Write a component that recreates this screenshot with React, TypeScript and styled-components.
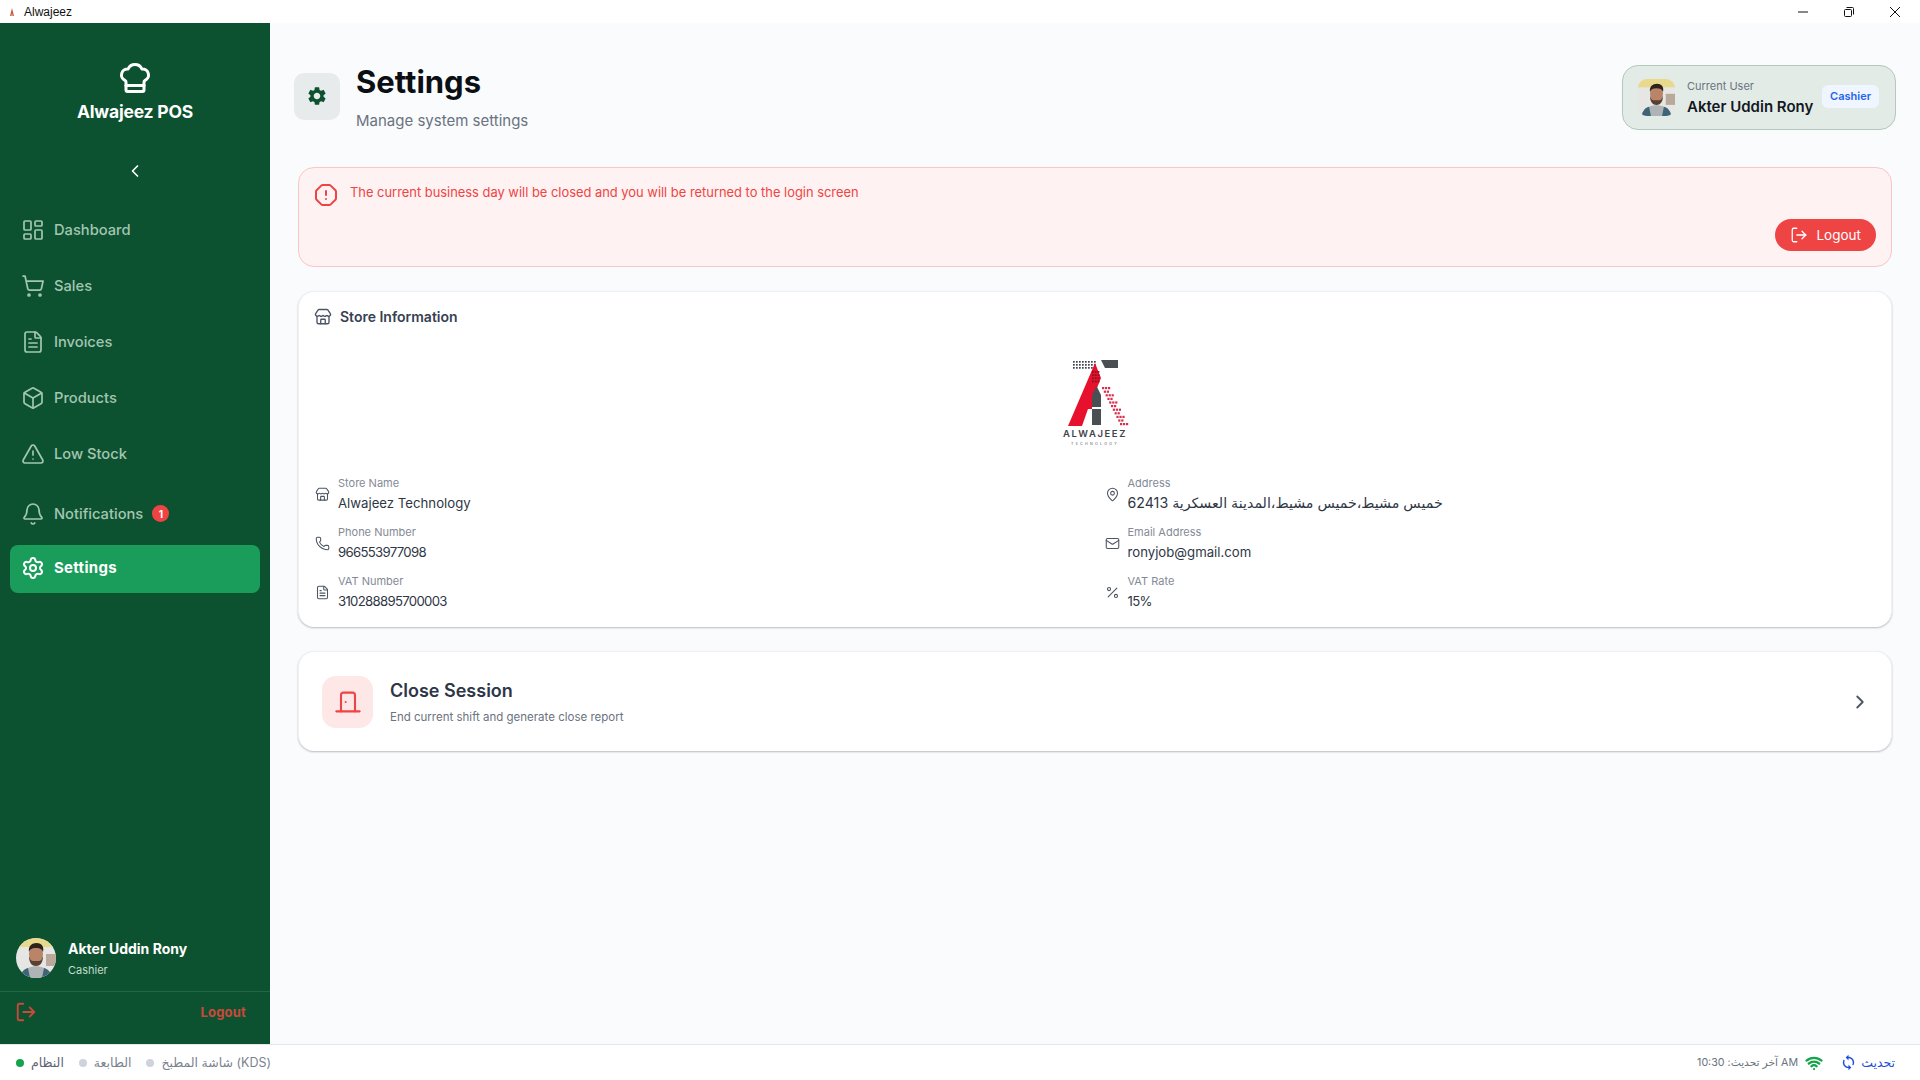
import styled, { createGlobalStyle } from "styled-components";
import {
  Bell,
  Box,
  ChefHat,
  ChevronLeft,
  ChevronRight,
  DoorClosed,
  FileText,
  LayoutDashboard,
  LogOut,
  Mail,
  MapPin,
  OctagonAlert,
  Percent,
  Phone,
  Settings as SettingsIcon,
  ShoppingCart,
  Store,
  TriangleAlert,
  Wifi,
} from "lucide-react";
import { MdSettings, MdSync } from "react-icons/md";

const GlobalStyle = createGlobalStyle`
  html, body, #root {
    margin: 0;
    height: 100%;
  }

  body {
    font-family: Inter, "DejaVu Sans", sans-serif;
    background: #f9fbfd;
    overflow: hidden;
  }

  * {
    box-sizing: border-box;
  }
`;

const Shell = styled.div`
  display: flex;
  flex-direction: column;
  width: 1920px;
  height: 1080px;
`;

const TitleBar = styled.div`
  display: flex;
  align-items: center;
  height: 23px;
  padding: 0 2px 0 9px;
  background: #fff;
  color: #111;
  font-size: 12px;
`;

const TitleName = styled.span`
  margin-left: 9px;
  flex: 1;
  font-family: "Liberation Sans", sans-serif;
`;

const WindowButton = styled.div`
  display: flex;
  align-items: center;
  justify-content: center;
  width: 46px;
  height: 23px;
`;

const Body = styled.div`
  flex: 1;
  display: flex;
  min-height: 0;
`;

const Sidebar = styled.aside`
  display: flex;
  flex-direction: column;
  width: 270px;
  background: #0d5230;
`;

const Brand = styled.div`
  display: flex;
  flex-direction: column;
  align-items: center;
  height: 183px;
  padding-top: 37px;
  color: #fff;
`;

const BrandName = styled.div`
  margin-top: 4px;
  font-size: 17.5px;
  font-weight: 700;
  line-height: 24px;
  letter-spacing: -0.2px;
`;

const Collapse = styled.div`
  margin-top: 37px;
  height: 24px;
`;

const Nav = styled.nav`
  flex: 1;
  display: flex;
  flex-direction: column;
  gap: 8px;
  padding: 0 10px;
`;

const NavItem = styled.div<{ $active?: boolean; $tall?: boolean }>`
  display: flex;
  align-items: center;
  gap: 9px;
  height: ${(p) => (p.$tall ? "51px" : "48px")};
  padding-left: 11px;
  padding-top: ${(p) => (p.$tall ? "4px" : "0")};
  padding-bottom: ${(p) => (p.$active ? "3px" : "0")};
  border-radius: 8px;
  background: ${(p) => (p.$active ? "#1a9c5b" : "transparent")};
  color: ${(p) => (p.$active ? "#fff" : "#a3c6b2")};
  font-size: ${(p) => (p.$active ? "15px" : "14.7px")};
  font-weight: ${(p) => (p.$active ? 700 : 500)};
  letter-spacing: ${(p) => (p.$active ? "0.3px" : "0")};
`;

const CountBadge = styled.span`
  display: flex;
  align-items: center;
  justify-content: center;
  width: 17px;
  height: 17px;
  border-radius: 50%;
  background: #ef4444;
  color: #fff;
  font-size: 10px;
  font-weight: 700;
`;

const Profile = styled.div`
  display: flex;
  align-items: center;
  gap: 12px;
  height: 71px;
  padding: 4px 16px 0;
  margin-top: -24px;
  border-bottom: 1px solid #1f6a45;
`;

const ProfileName = styled.div`
  color: #fff;
  font-size: 14px;
  font-weight: 700;
  line-height: 20px;
`;

const ProfileRole = styled.div`
  margin-top: 4px;
  color: #c3dccd;
  font-size: 11px;
  line-height: 14px;
`;

const SideLogout = styled.div`
  display: flex;
  align-items: center;
  justify-content: space-between;
  height: 52px;
  padding: 0 24px 12px 15px;
  color: #c9493b;
  font-size: 13px;
  font-weight: 700;
  letter-spacing: 0.2px;
`;

const AvatarFrame = styled.svg<{ $size: number; $radius: string }>`
  flex: none;
  width: ${(p) => p.$size}px;
  height: ${(p) => p.$size}px;
  border-radius: ${(p) => p.$radius};
`;

const Main = styled.main`
  flex: 1;
  min-width: 0;
  padding: 39px 24px 0;
`;

const Header = styled.header`
  display: flex;
  align-items: center;
  justify-content: space-between;
  height: 68px;
`;

const HeaderLeft = styled.div`
  display: flex;
  align-items: center;
  gap: 16px;
`;

const GearBox = styled.div`
  display: flex;
  align-items: center;
  justify-content: center;
  width: 46px;
  height: 47px;
  border-radius: 10px;
  background: #e8ebeb;
  color: #0d5230;
`;

const PageTitle = styled.h1`
  margin: 0;
  color: #0b0f14;
  font-size: 31px;
  font-weight: 700;
  line-height: 40px;
`;

const PageSubtitle = styled.div`
  margin-top: 9px;
  color: #6b7280;
  font-size: 15px;
  line-height: 20px;
`;

const UserCard = styled.div`
  display: flex;
  align-items: center;
  width: 274px;
  height: 65px;
  margin-top: 2px;
  padding: 0 16px 0 15px;
  border: 1px solid #b4c8bd;
  border-radius: 16px;
  background: #e2ebe6;
`;

const UserText = styled.div`
  flex: 1;
  margin-left: 12px;
  padding-top: 1px;
`;

const UserLabel = styled.div`
  color: #6b7280;
  font-size: 11px;
  line-height: 14px;
`;

const UserName = styled.div`
  margin-top: 4px;
  color: #14181f;
  font-size: 15px;
  font-weight: 600;
  line-height: 20px;
  white-space: nowrap;
`;

const RoleBadge = styled.div`
  margin-bottom: 2px;
  padding: 0 8px;
  height: 23px;
  line-height: 23px;
  border-radius: 6px;
  background: #eff6ff;
  color: #2563eb;
  font-size: 11px;
  font-weight: 600;
`;

const Content = styled.div`
  display: flex;
  flex-direction: column;
  gap: 24px;
  margin: 37px 4px 0 4px;
`;

const Alert = styled.section`
  height: 100px;
  padding: 15px;
  border: 1px solid #fbc6c6;
  border-radius: 16px;
  background: #fef2f2;
  color: #ef4444;
`;

const AlertRow = styled.div`
  display: flex;
  align-items: flex-start;
  gap: 12px;
  font-size: 12.9px;
  line-height: 20px;
`;

const AlertAction = styled.div`
  display: flex;
  justify-content: flex-end;
  margin-top: 12px;
`;

const DangerButton = styled.button`
  display: flex;
  align-items: center;
  gap: 8px;
  height: 32px;
  padding: 0 15px;
  border: 0;
  border-radius: 16px;
  background: #ef4444;
  color: #fff;
  font-family: inherit;
  font-size: 13.5px;
`;

const Card = styled.section`
  padding: 0 16px;
  border: 1px solid #eef0f3;
  border-bottom: 0;
  border-radius: 16px;
  background: #fff;
  box-shadow: 0 1px 2px rgba(15, 23, 42, 0.28);
`;

const StoreCard = styled(Card)`
  height: 336px;
`;

const CardTitle = styled.div`
  display: flex;
  align-items: center;
  gap: 8px;
  height: 48px;
  margin-left: -1px;
  padding-top: 1px;
  color: #374151;
  font-size: 14px;
  font-weight: 600;
`;

const LogoWrap = styled.div`
  display: flex;
  justify-content: center;
  height: 134px;
  padding-top: 18px;
`;

const InfoGrid = styled.div`
  display: grid;
  grid-template-columns: 1fr 1fr;
  column-gap: 19px;
  row-gap: 9px;
`;

const InfoItem = styled.div`
  display: flex;
  align-items: center;
  gap: 8px;
  height: 40px;
  color: #4b5563;
`;

const InfoLabel = styled.div`
  color: #848a96;
  font-size: 11px;
  line-height: 14px;
`;

const InfoValue = styled.div<{ $kind: string }>`
  margin-top: 4px;
  color: #2f3644;
  font-size: ${(p) => (p.$kind === "arabic" ? "14.2px" : "13.2px")};
  letter-spacing: ${(p) => (p.$kind === "number" ? "-0.7px" : "0")};
  line-height: 18px;
`;

const SessionCard = styled(Card)`
  display: flex;
  align-items: center;
  height: 100px;
  padding: 0 20px 0 23px;
`;

const SessionIcon = styled.div`
  display: flex;
  align-items: center;
  justify-content: center;
  width: 51px;
  height: 52px;
  border-radius: 14px;
  background: #fee7e7;
  color: #ef4444;
`;

const SessionText = styled.div`
  flex: 1;
  margin-left: 17px;
`;

const SessionTitle = styled.div`
  color: #2d3748;
  font-size: 18px;
  font-weight: 600;
  line-height: 24px;
`;

const SessionHint = styled.div`
  margin-top: 6px;
  color: #6b7280;
  font-size: 11.5px;
  line-height: 16px;
`;

const StatusBar = styled.footer`
  display: flex;
  align-items: center;
  justify-content: space-between;
  height: 36px;
  padding: 0 25px 0 16px;
  border-top: 1px solid #e5e7eb;
  background: #fff;
  font-size: 12.5px;
`;

const StatusGroup = styled.div`
  display: flex;
  align-items: center;
`;

const StatusEntry = styled.div<{ $on?: boolean }>`
  display: flex;
  align-items: center;
  gap: 7px;
  margin-right: 15px;
  color: ${(p) => (p.$on ? "#5b6472" : "#7b8290")};
`;

const StatusDot = styled.span<{ $on?: boolean }>`
  width: 8px;
  height: 8px;
  border-radius: 50%;
  background: ${(p) => (p.$on ? "#16a34a" : "#cfd3de")};
`;

const UpdatedAt = styled.span`
  color: #6b7280;
  font-size: 10.7px;
`;

const WifiIcon = styled(Wifi)`
  margin-left: 7px;
`;

const RefreshLink = styled.div`
  display: flex;
  align-items: center;
  gap: 4px;
  margin-left: 17px;
  color: #1d4ed8;
`;

function Avatar({ size, radius }: { size: number; radius: string }) {
  return (
    <AvatarFrame $size={size} $radius={radius} viewBox="0 0 40 40">
      <rect width="40" height="40" fill="#e6e6e4" />
      <rect width="40" height="9" fill="#e8d98c" />
      <rect x="30" y="16" width="10" height="12" fill="#b9a99a" />
      <path d="M4 40c1-8 7-11 16-12 9 1 15 4 16 12z" fill="#aeb4b5" />
      <path d="M4 40c1-6 4-9 8-10l2 10zM36 40c-1-6-4-9-8-10l-2 10z" fill="#3f6478" />
      <ellipse cx="20" cy="16" rx="7" ry="10" fill="#b98467" />
      <path d="M13 18c0 7 3 10 7 10s7-3 7-10c-1 3-2 5-4 5h-6c-2 0-3-2-4-5z" fill="#5a4032" />
      <path d="M13 14c-1-6 3-9 7.500-9s8 3 6.500 9c-1-3-3-4-7-4s-6 1-7 4z" fill="#2e221c" />
    </AvatarFrame>
  );
}

function Logo() {
  const blackDots: [number, number][] = [];
  for (let row = 0; row < 3; row++) {
    for (let col = 0; col < 8; col++) {
      blackDots.push([13 + col * 3, 3 + row * 3]);
    }
  }
  const innerDots: [number, number][] = [];
  for (let row = 0; row < 4; row++) {
    for (let col = 0; col < 3; col++) {
      innerDots.push([32 + col * 2.800, 13 + row * 3.200]);
    }
  }
  const redDots: [number, number][] = [];
  for (let row = 0; row < 11; row++) {
    for (let col = 0; col < 3 - (row % 2); col++) {
      redDots.push([42 + row * 1.800 + col * 3, 29 + row * 3.600]);
    }
  }
  return (
    <svg width="70" height="90" viewBox="0 0 70 90">
      {blackDots.map(([x, y]) => (
        <rect key={`${x}-${y}`} x={x} y={y} width="1.700" height="1.700" fill="#3f4448" />
      ))}
      <path d="M41 2h17v8H45z" fill="#4a4f53" />
      <path d="M35 5l6 15-8 20v11h-5l-6 17H8z" fill="#e8112d" />
      {innerDots.map(([x, y]) => (
        <rect key={`${x}-${y}`} x={x} y={y} width="1.800" height="1.800" fill="#8e1220" />
      ))}
      <path d="M36.500 28l4.500 9v30h-9V37z" fill="#4a4f53" />
      <rect x="32" y="49" width="9" height="2" fill="#fff" />
      {redDots.map(([x, y]) => (
        <rect key={`${x}-${y}`} x={x} y={y} width="2.200" height="2.200" fill="#d92d4a" />
      ))}
      <text x="35" y="79" textAnchor="middle" fontFamily="Inter, sans-serif" fontSize="9.500" fontWeight="600" letterSpacing="1.600" fill="#3f4448">
        ALWAJEEZ
      </text>
      <text x="35" y="87" textAnchor="middle" fontFamily="Inter, sans-serif" fontSize="3.600" letterSpacing="2.300" fill="#55595d">
        TECHNOLOGY
      </text>
    </svg>
  );
}

const navItems = [
  { label: "Dashboard", icon: LayoutDashboard },
  { label: "Sales", icon: ShoppingCart },
  { label: "Invoices", icon: FileText },
  { label: "Products", icon: Box },
  { label: "Low Stock", icon: TriangleAlert },
];

const infoItems = [
  { label: "Store Name", value: "Alwajeez Technology", kind: "text", icon: Store },
  { label: "Address", value: "خميس مشيط،خميس مشيط،المدينة العسكرية 62413", kind: "arabic", icon: MapPin },
  { label: "Phone Number", value: "966553977098", kind: "number", icon: Phone },
  { label: "Email Address", value: "ronyjob@gmail.com", kind: "text", icon: Mail },
  { label: "VAT Number", value: "310288895700003", kind: "number", icon: FileText },
  { label: "VAT Rate", value: "15%", kind: "number", icon: Percent },
];

export default function App() {
  return (
    <Shell>
      <GlobalStyle />
      <TitleBar>
        <svg width="6" height="10" viewBox="0 0 6 10">
          <path d="M3 1L1 9h1.500l.5-3 .5 3H5z" fill="#c8553d" />
        </svg>
        <TitleName>Alwajeez</TitleName>
        <WindowButton>
          <svg width="12" height="12" viewBox="0 0 12 12">
            <path d="M1 6h10" stroke="#111" />
          </svg>
        </WindowButton>
        <WindowButton>
          <svg width="12" height="12" viewBox="0 0 12 12" fill="none" stroke="#111">
            <rect x="1.500" y="3.500" width="7" height="7" rx="1" />
            <path d="M3.500 1.500h6a1 1 0 0 1 1 1v6" />
          </svg>
        </WindowButton>
        <WindowButton>
          <svg width="12" height="12" viewBox="0 0 12 12">
            <path d="M1 1l10 10M11 1L1 11" stroke="#111" />
          </svg>
        </WindowButton>
      </TitleBar>
      <Body>
        <Sidebar>
          <Brand>
            <ChefHat size={36} strokeWidth={2} />
            <BrandName>Alwajeez POS</BrandName>
            <Collapse>
              <ChevronLeft size={20} />
            </Collapse>
          </Brand>
          <Nav>
            {navItems.map((item) => (
              <NavItem key={item.label}>
                <item.icon size={24} strokeWidth={1.7} />
                {item.label}
              </NavItem>
            ))}
            <NavItem $tall>
              <Bell size={24} strokeWidth={1.7} />
              Notifications
              <CountBadge>1</CountBadge>
            </NavItem>
            <NavItem $active>
              <SettingsIcon size={24} strokeWidth={2} />
              Settings
            </NavItem>
          </Nav>
          <Profile>
            <Avatar size={40} radius="50%" />
            <div>
              <ProfileName>Akter Uddin Rony</ProfileName>
              <ProfileRole>Cashier</ProfileRole>
            </div>
          </Profile>
          <SideLogout>
            <LogOut size={22} strokeWidth={2} />
            Logout
          </SideLogout>
        </Sidebar>
        <Main>
          <Header>
            <HeaderLeft>
              <GearBox>
                <MdSettings size={22} />
              </GearBox>
              <div>
                <PageTitle>Settings</PageTitle>
                <PageSubtitle>Manage system settings</PageSubtitle>
              </div>
            </HeaderLeft>
            <UserCard>
              <Avatar size={37} radius="9px" />
              <UserText>
                <UserLabel>Current User</UserLabel>
                <UserName>Akter Uddin Rony</UserName>
              </UserText>
              <RoleBadge>Cashier</RoleBadge>
            </UserCard>
          </Header>
          <Content>
            <Alert>
              <AlertRow>
                <OctagonAlert size={24} strokeWidth={2} />
                The current business day will be closed and you will be returned to the login screen
              </AlertRow>
              <AlertAction>
                <DangerButton>
                  <LogOut size={18} strokeWidth={1.7} />
                  Logout
                </DangerButton>
              </AlertAction>
            </Alert>
            <StoreCard>
              <CardTitle>
                <Store size={18} color="#4b5563" strokeWidth={1.8} />
                Store Information
              </CardTitle>
              <LogoWrap>
                <Logo />
              </LogoWrap>
              <InfoGrid>
                {infoItems.map((item) => (
                  <InfoItem key={item.label}>
                    <item.icon size={15} strokeWidth={1.7} />
                    <div>
                      <InfoLabel>{item.label}</InfoLabel>
                      <InfoValue $kind={item.kind}>{item.value}</InfoValue>
                    </div>
                  </InfoItem>
                ))}
              </InfoGrid>
            </StoreCard>
            <SessionCard>
              <SessionIcon>
                <DoorClosed size={28} strokeWidth={1.8} />
              </SessionIcon>
              <SessionText>
                <SessionTitle>Close Session</SessionTitle>
                <SessionHint>End current shift and generate close report</SessionHint>
              </SessionText>
              <ChevronRight size={22} color="#4b5563" />
            </SessionCard>
          </Content>
        </Main>
      </Body>
      <StatusBar>
        <StatusGroup>
          <StatusEntry $on>
            <StatusDot $on />
            النظام
          </StatusEntry>
          <StatusEntry>
            <StatusDot />
            الطابعة
          </StatusEntry>
          <StatusEntry>
            <StatusDot />
            شاشة المطبخ (KDS)
          </StatusEntry>
        </StatusGroup>
        <StatusGroup>
          <UpdatedAt>آخر تحديث: 10:30 AM</UpdatedAt>
          <WifiIcon size={18} color="#16a34a" strokeWidth={3} />
          <RefreshLink>
            <MdSync size={17} />
            تحديث
          </RefreshLink>
        </StatusGroup>
      </StatusBar>
    </Shell>
  );
}
